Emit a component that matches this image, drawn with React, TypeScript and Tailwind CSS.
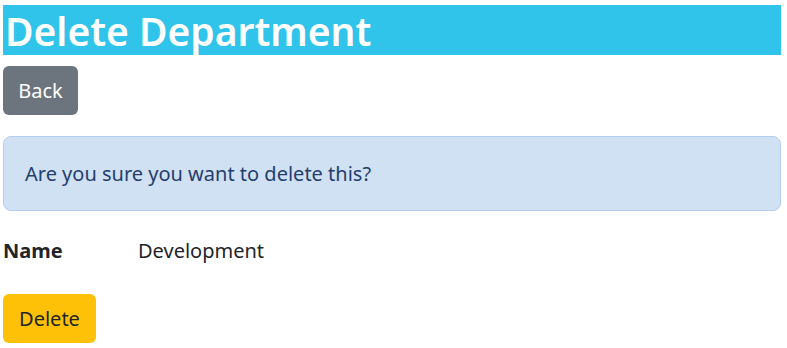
export default function App() {
  return (
    <div className="min-h-[348px] bg-white px-[3px] pt-[5px] text-[20px] leading-[1.5] text-[#212529] [font-family:'Segoe_UI','Noto_Sans',sans-serif]">
      <h1 className="h-[50px] w-[778px] bg-[#31c4ea] pl-[2px] text-[39px] font-semibold leading-[52px] text-white">
        Delete Department
      </h1>

      <button className="mt-[11px] h-[49px] w-[75px] rounded-[6px] bg-[#6c757d] text-white">
        Back
      </button>

      <div className="mt-[21px] flex h-[75px] w-[778px] items-center rounded-[8px] border border-[#b3cdee] bg-[#d0e1f4] px-[21px] text-[#253e6c]">
        Are you sure you want to delete this?
      </div>

      <dl className="mt-[25px] flex items-center">
        <dt className="w-[135px] font-bold">Name</dt>
        <dd>Development</dd>
      </dl>

      <button className="mt-[28px] h-[49px] w-[93px] rounded-[6px] bg-[#ffc107] text-[#212529]">
        Delete
      </button>
    </div>
  );
}
